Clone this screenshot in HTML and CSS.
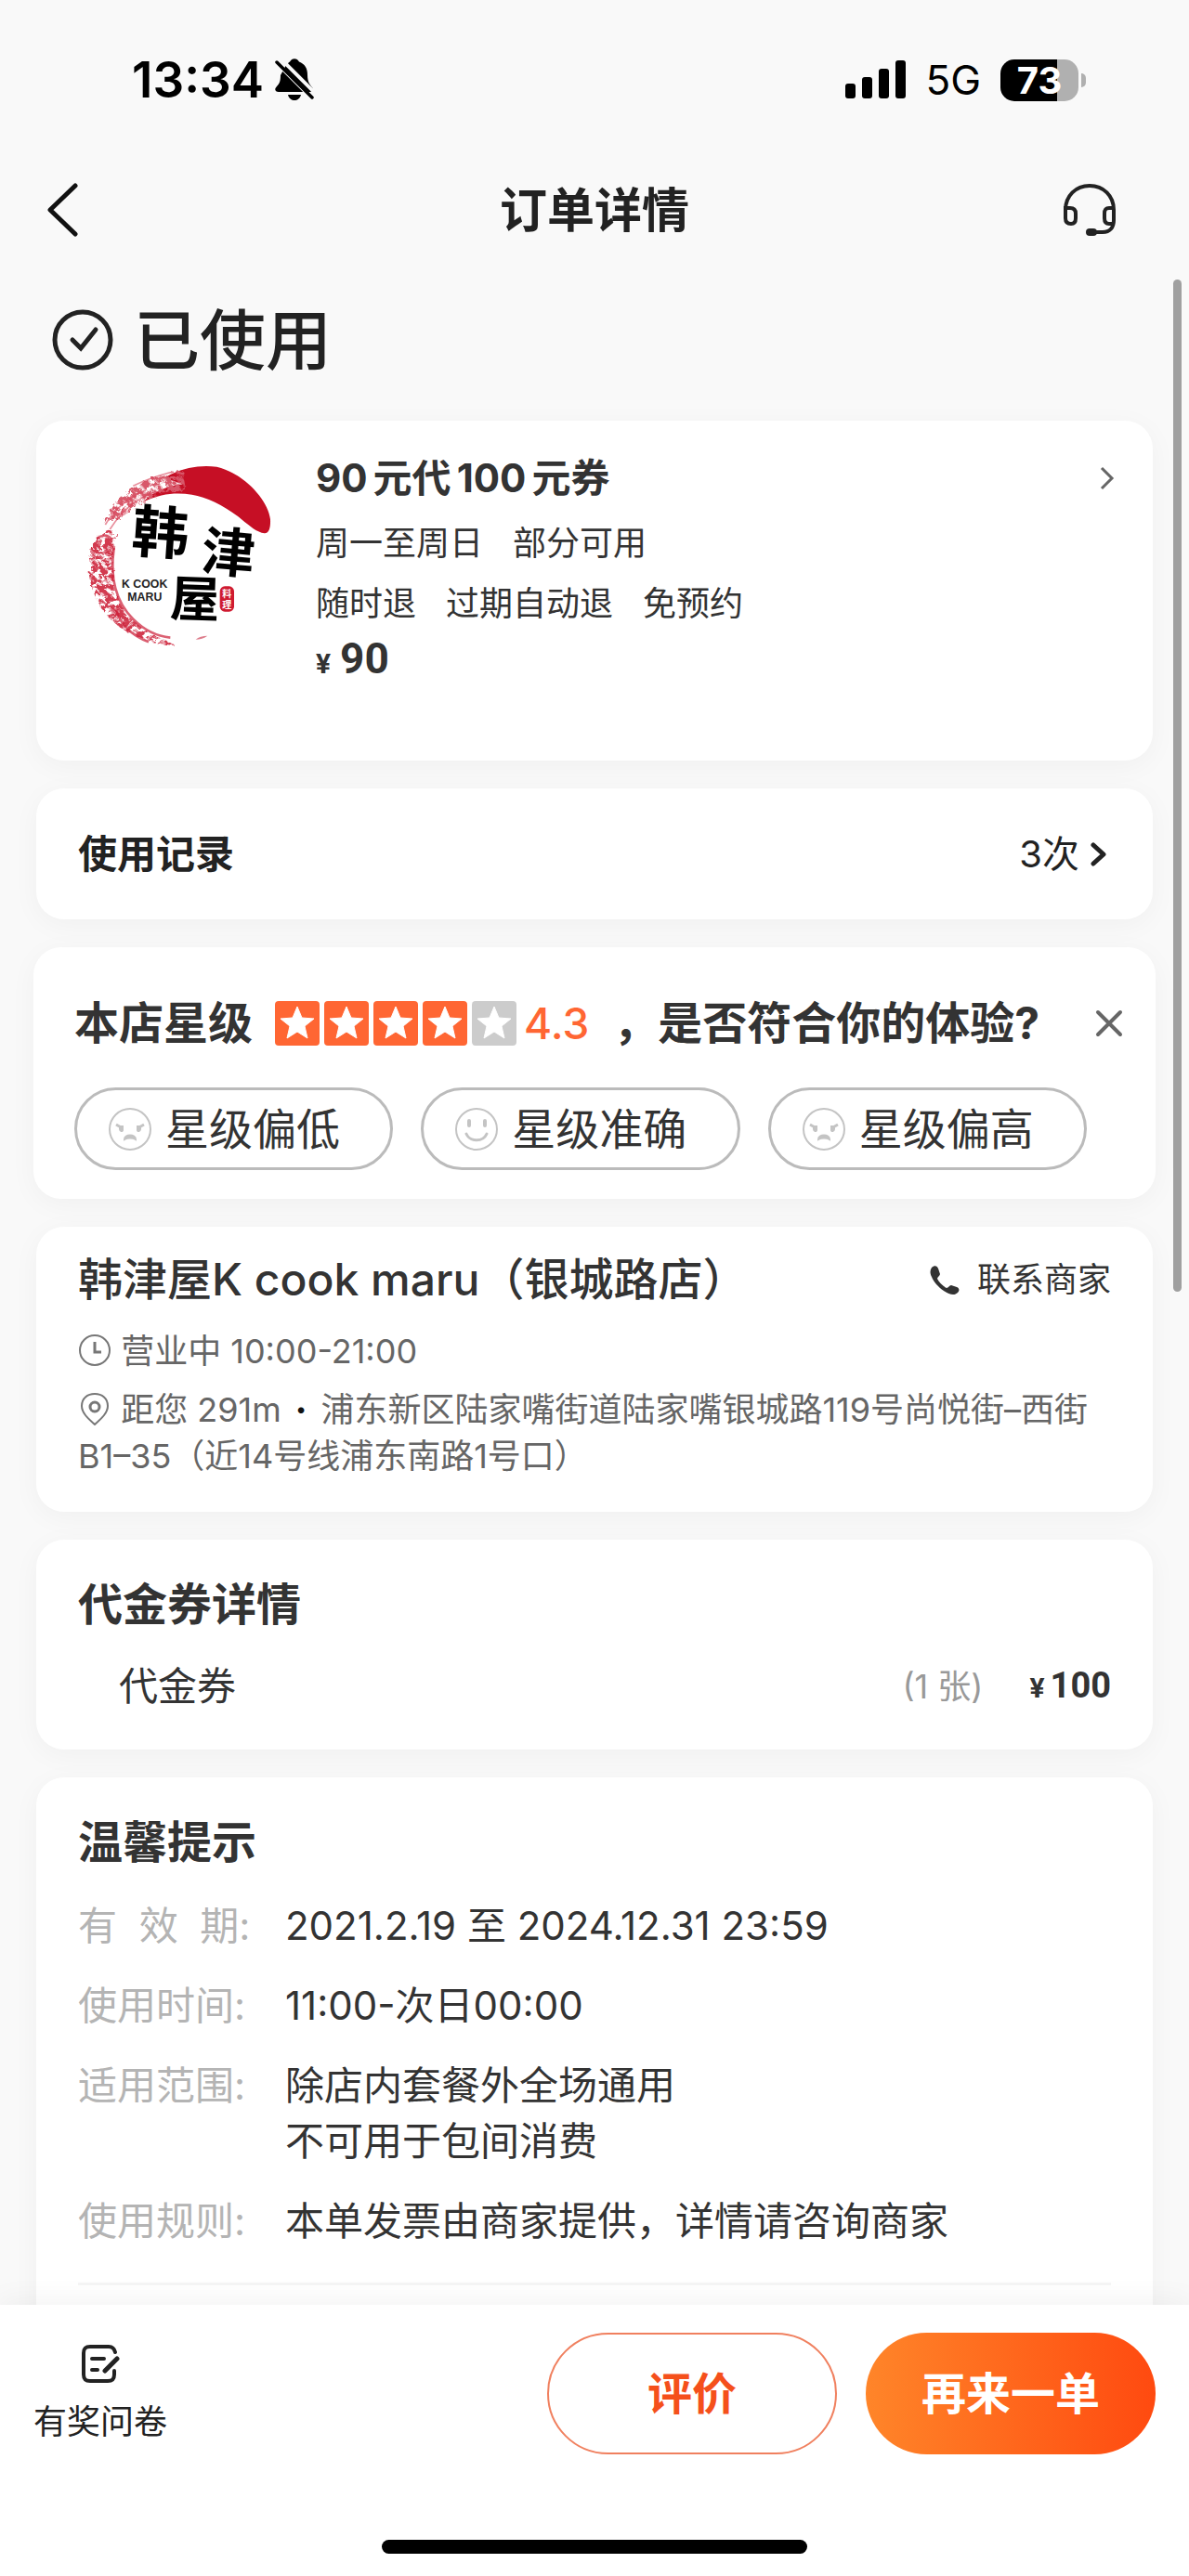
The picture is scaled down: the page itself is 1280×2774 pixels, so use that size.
FILE: index.html
```html
<!DOCTYPE html>
<html lang="zh-CN">
<head>
	<meta charset="utf-8">
	<meta name="viewport" content="width=device-width, initial-scale=1">
	<title>订单详情</title>
	<link rel="stylesheet" href="styles.css">
</head>
<body>
	<div class="status-bar">
		<div class="status-left">
			<span class="time">13:34</span>
			<svg width="42" height="46" viewBox="0 0 42 46">
				<path d="M12 7C14 5 15 4 16 3.500C18-1 24-1 26 3.500C32 6 35 10 35 18C35 25 38 29 40 31C42 34 40 36 38 36H4C0 36-1 33 2 30C5 27 6 24 6 18Z" fill="#000"/>
				<path d="M14 39H28C27 43 24 45 21 45C18 45 15 43 14 39Z" fill="#000"/>
				<path d="M-1 2L42 45M4-2L46 40" stroke="#f9f9f9" stroke-width="4"/>
				<path d="M2 4L40 42" stroke="#000" stroke-width="3.500" stroke-linecap="round"/>
			</svg>
		</div>
		<div class="status-right">
			<svg width="65" height="42" viewBox="0 0 65 42">
				<rect x="0" y="25" width="11" height="16" rx="3"/>
				<rect x="18" y="18" width="11" height="23" rx="3"/>
				<rect x="36" y="9" width="11" height="32" rx="3"/>
				<rect x="54" y="0" width="11" height="41" rx="3"/>
			</svg>
			<span class="network">5G</span>
			<span class="battery">73</span>
		</div>
	</div>

	<header class="nav">
		<a class="nav-back" href="#" aria-label="返回">
			<svg width="34" height="58" viewBox="0 0 34 58"><path d="M31 3L4 29L31 55" fill="none" stroke="#111" stroke-width="5" stroke-linecap="round" stroke-linejoin="round"/></svg>
		</a>
		<h1>订单详情</h1>
		<a class="nav-service" href="#" aria-label="客服">
			<svg width="58" height="58" viewBox="0 0 58 58" fill="none" stroke="#222" stroke-width="4">
				<path d="M3 30V29C3 14 14 3 29 3S55 14 55 29V40C55 48 51 53 43 53H30"/>
				<path d="M3 27H8C12 27 14 29 14 33V38C14 42 12 44 9 44C5 44 3 42 3 38ZM55 27H50C46 27 45 29 45 33V38C45 42 47 44 50 44H54"/>
				<path d="M29 53H33" stroke-width="8" stroke-linecap="round"/>
			</svg>
		</a>
	</header>

	<main class="content">
		<div class="scrollbar"></div>
		<div class="order-state">
			<svg width="66" height="66" viewBox="0 0 66 66" fill="none" stroke="#222" stroke-width="5">
				<circle cx="33" cy="33" r="30"/>
				<path d="M22 33L31 42L47 22" stroke-linecap="round"/>
			</svg>
			<h2>已使用</h2>
		</div>

		<section class="card goods">
			<svg class="goods-logo" width="240" height="240" viewBox="0 0 720 720">
				<defs>
					<filter id="brush" x="-10%" y="-10%" width="120%" height="120%">
						<feTurbulence type="fractalNoise" baseFrequency="0.05 0.06" numOctaves="3" seed="4" result="n"/>
						<feColorMatrix in="n" type="matrix" values="0 0 0 0 0  0 0 0 0 0  0 0 0 0 0  6 0 0 0 -2.300" result="m"/>
						<feComposite in="SourceGraphic" in2="m" operator="in" result="c"/>
						<feDisplacementMap in="c" in2="n" scale="22"/>
					</filter>
				</defs>
				<path d="M290 104C340 74 400 60 460 68C540 86 625 170 633 238C634 262 630 284 614 283C590 280 570 262 540 238C490 196 430 166 380 158C330 150 280 154 225 180C250 150 300 130 350 124Z" fill="#c60f25"/>
				<g filter="url(#brush)">
					<path d="M350 80C240 90 140 150 92 250C130 230 150 240 165 225C210 175 280 150 360 145Z" fill="#d8596b"/>
					<path d="M80 295C30 350 40 440 80 510C120 590 220 640 330 645C250 610 170 570 145 500C115 420 120 350 140 275C110 270 100 280 80 295Z" fill="#d23a50"/>
				</g>
				<path d="M72 300C92 285 112 288 122 305M128 330C115 420 130 500 190 560C220 590 260 615 310 620M135 530C150 580 190 615 240 634" fill="none" stroke="#cc1d36" stroke-width="8" stroke-opacity=".7"/>
				<path d="M100 255C130 205 170 170 230 145M115 270C150 215 200 170 260 150M190 130C230 110 270 96 320 84" fill="none" stroke="#d8425a" stroke-width="5" stroke-opacity=".6"/>
				<path d="M392 626C400 618 415 614 430 614C420 622 405 626 392 626Z" fill="#dd7d8c"/>
				<g class="logo-brush">
					<text x="186" y="348" font-size="184" transform="rotate(4 280 280)">韩</text>
					<text x="412" y="408" font-size="172" transform="rotate(5 500 340)">津</text>
					<text x="310" y="552" font-size="160" transform="rotate(2 380 490)">屋</text>
				</g>
				<text class="logo-en" x="153" y="458" font-size="37">K COOK</text>
				<text class="logo-en" x="172" y="502" font-size="37">MARU</text>
				<rect x="470" y="454" width="46" height="82" rx="16" fill="#cf1a30"/>
				<text class="logo-seal" x="478" y="490" font-size="30">料</text>
				<text class="logo-seal" x="478" y="524" font-size="30">理</text>
			</svg>
			<div class="goods-info">
				<h3><span>90</span><span>元代</span><span>100</span><span>元券</span></h3>
				<p><span>周一至周日</span><span>部分可用</span></p>
				<p><span>随时退</span><span>过期自动退</span><span>免预约</span></p>
				<div class="price"><i>¥</i>90</div>
			</div>
			<a class="goods-more" href="#" aria-label="查看商品">
				<svg width="16" height="28" viewBox="0 0 16 28"><path d="M2 3L13 14L2 25" fill="none" stroke="#666" stroke-width="3"/></svg>
			</a>
		</section>

		<section class="card record">
			<h3>使用记录</h3>
			<a href="#">3次
				<svg width="18" height="28" viewBox="0 0 18 28"><path d="M3 4L14 14L3 24" fill="none" stroke="#222" stroke-width="5" stroke-linecap="round" stroke-linejoin="round"/></svg>
			</a>
		</section>

		<section class="card rating">
			<div class="rating-head">
				<h3>本店星级</h3>
				<svg class="stars" width="260" height="48" viewBox="0 0 260 48">
					<defs>
						<path id="star" d="M24 6L29 18L42 19L32 27L35 40L24 33L13 40L16 27L6 19L19 18Z" fill="#fff" stroke="#fff" stroke-linejoin="round"/>
					</defs>
					<g fill="#ff6633">
						<rect x="0" width="48" height="48" rx="4"/>
						<rect x="53" width="48" height="48" rx="4"/>
						<rect x="106" width="48" height="48" rx="4"/>
						<rect x="159" width="48" height="48" rx="4"/>
					</g>
					<rect x="212" width="48" height="48" rx="4" fill="#ccc"/>
					<use href="#star"/>
					<use href="#star" x="53"/>
					<use href="#star" x="106"/>
					<use href="#star" x="159"/>
					<use href="#star" x="212"/>
				</svg>
				<span class="score">4.3</span>
				<span class="question">，是否符合你的体验?</span>
				<button class="close" type="button" aria-label="关闭">
					<svg width="30" height="30" viewBox="0 0 30 30"><path d="M3 3L27 27M27 3L3 27" stroke="#666" stroke-width="4" stroke-linecap="round"/></svg>
				</button>
			</div>
			<div class="pills">
				<button class="pill" type="button">
					<svg width="46" height="46" viewBox="0 0 46 46" fill="none" stroke="#c4c4c4" stroke-width="2">
						<circle cx="23" cy="23" r="22"/>
						<path d="M8 18L15 22M38 18L31 22" stroke-width="3"/>
						<path d="M12 20H15V24C15 26 12 25 12 23ZM31 20H34V23C34 25 31 26 31 24ZM17 34C17 28 29 28 29 34C26 32 20 32 17 34Z" fill="#c4c4c4"/>
					</svg>
					星级偏低
				</button>
				<button class="pill" type="button">
					<svg width="46" height="46" viewBox="0 0 46 46" fill="none" stroke="#c4c4c4" stroke-width="2">
						<circle cx="23" cy="23" r="22"/>
						<path d="M15 14V19M32 14V19" stroke-width="4" stroke-linecap="round"/>
						<path d="M12 28C16 37 30 37 34 28" stroke-width="3" stroke-linecap="round"/>
					</svg>
					星级准确
				</button>
				<button class="pill" type="button">
					<svg width="46" height="46" viewBox="0 0 46 46" fill="none" stroke="#c4c4c4" stroke-width="2">
						<circle cx="23" cy="23" r="22"/>
						<path d="M8 18L15 22M38 18L31 22" stroke-width="3"/>
						<path d="M12 20H15V24C15 26 12 25 12 23ZM31 20H34V23C34 25 31 26 31 24ZM17 34C17 28 29 28 29 34C26 32 20 32 17 34Z" fill="#c4c4c4"/>
					</svg>
					星级偏高
				</button>
			</div>
		</section>

		<section class="card shop">
			<div class="shop-head">
				<h3>韩津屋K cook maru（银城路店）</h3>
				<a href="#">
					<svg width="34" height="34" viewBox="0 0 34 34"><path d="M3 4C6 1 9 2 10 5L12 11C12 13 9 14 9 16C11 20 15 24 19 26C21 26 22 23 24 23L30 25C33 26 33 29 31 31C28 34 23 34 16 29C10 25 5 19 3 14C1 10 1 7 3 4Z" fill="#333"/></svg>
					联系商家
				</a>
			</div>
			<p class="hours">
				<svg width="36" height="36" viewBox="0 0 36 36" fill="none" stroke="#777" stroke-width="2"><circle cx="18" cy="18" r="16"/><path d="M18 9V20H25" stroke-width="3"/></svg>
				营业中 10:00-21:00
			</p>
			<p class="address">
				<svg width="36" height="36" viewBox="0 0 36 36" fill="none" stroke="#777" stroke-width="2"><path d="M18 35C10 28 4 22 4 15C4 7 10 2 18 2S32 7 32 15C32 22 26 28 18 35Z"/><circle cx="18" cy="16" r="5" stroke-width="3"/></svg>
				距您 291m<b>·</b>浦东新区陆家嘴街道陆家嘴银城路119号尚悦街–西街B1–35（近14号线浦东南路1号口）
			</p>
		</section>

		<section class="card voucher">
			<h3>代金券详情</h3>
			<div class="voucher-row">
				<span class="name">代金券</span>
				<span class="count">(1 张)</span>
				<span class="price"><i>¥</i>100</span>
			</div>
		</section>

		<section class="card tips">
			<h3>温馨提示</h3>
			<dl>
				<dt>有&nbsp;&nbsp;效&nbsp;&nbsp;期:</dt>
				<dd>2021.2.19 至 2024.12.31 23:59</dd>
				<dt>使用时间:</dt>
				<dd>11:00-次日00:00</dd>
				<dt>适用范围:</dt>
				<dd>除店内套餐外全场通用<br>不可用于包间消费</dd>
				<dt>使用规则:</dt>
				<dd>本单发票由商家提供，详情请咨询商家</dd>
			</dl>
		</section>
	</main>

	<footer class="footer">
		<div class="actions">
			<a class="survey" href="#">
				<svg width="42" height="42" viewBox="0 0 42 42" fill="none" stroke="#222" stroke-width="4" stroke-linecap="round">
					<path d="M37 8C36 4 34 2 30 2H10C5 2 3 4 3 9V32C3 37 5 39 10 39H29C34 39 36 37 36 32V28"/>
					<path d="M12 15H25M12 27H18"/>
					<path d="M39 15L26 28" stroke-width="5"/>
				</svg>
				有奖问卷
			</a>
			<button class="btn btn-line" type="button">评价</button>
			<button class="btn btn-main" type="button">再来一单</button>
		</div>
		<div class="home-indicator"></div>
	</footer>
</body>
</html>
```
FILE: styles.css
```css
*
{
	box-sizing:border-box;
}
body
{
	display:flex;
	flex-direction:column;
	height:100vh;
	margin:0;
	background:#f9f9f9;
	color:#333;
	font-family:Inter,"Noto Sans CJK SC",sans-serif;
	font-size:36px;
	line-height:1;
}
h1,h2,h3,p,dl,dd
{
	margin:0;
}
h3
{
	font-size:48px;
	line-height:64px;
	font-weight:700;
}
a
{
	color:inherit;
	text-decoration:none;
}
button
{
	padding:0;
	border:0;
	background:none;
	color:inherit;
	font-family:inherit;
	line-height:1;
}
svg
{
	flex:none;
}

/* 状态栏 */
.status-bar
{
	display:flex;
	flex:none;
	align-items:center;
	justify-content:space-between;
	height:172px;
	padding:0 119px 0 142px;
	color:#000;
}
.status-left,.status-right
{
	display:flex;
	align-items:center;
}
.status-left
{
	gap:12px;
}
.status-right
{
	gap:21px;
}
.time
{
	font-size:53px;
	font-weight:600;
}
.network
{
	font-size:44px;
}
.battery
{
	position:relative;
	width:84px;
	height:45px;
	border-radius:15px;
	background:linear-gradient(to right,#000 73%,#b0b0b0 73%);
	color:#fff;
	font-size:40px;
	line-height:45px;
	font-weight:700;
	text-align:center;
}
.battery::after
{
	content:"";
	position:absolute;
	top:15px;
	right:-8px;
	width:5px;
	height:15px;
	border-radius:0 8px 8px 0;
	background:#b0b0b0;
}

/* 导航 */
.nav
{
	display:flex;
	flex:none;
	align-items:center;
	height:108px;
	padding:0 78px 0 50px;
}
.nav-back
{
	display:flex;
	width:86px;
}
.nav-service
{
	display:flex;
}
.nav h1
{
	flex:1;
	color:#222;
	font-size:51px;
	font-weight:700;
	text-align:center;
}

/* 内容 */
.content
{
	position:relative;
	display:flex;
	flex:1;
	flex-direction:column;
	gap:30px;
	min-height:0;
	padding:40px 39px 0;
	overflow:hidden;
}
.content > *
{
	flex:none;
}
.scrollbar
{
	position:absolute;
	top:21px;
	right:8px;
	width:9px;
	height:1090px;
	border-radius:5px;
	background:#a0a0a0;
}
.order-state
{
	display:flex;
	align-items:center;
	gap:22px;
	height:103px;
	padding:0 0 11px 17px;
	color:#222;
}
.order-state h2
{
	font-size:71px;
	line-height:92px;
	font-weight:500;
}
.card
{
	padding:0 45px;
	border-radius:30px;
	background:#fff;
	box-shadow:0 6px 30px rgba(0,0,0,.04);
}

.goods
{
	display:flex;
	gap:20px;
	height:366px;
	padding:27px 41px;
}
.goods-info
{
	flex:1;
	padding-top:5px;
}
.goods-info h3
{
	display:flex;
	gap:6px;
	margin-bottom:8px;
	font-size:42px;
	line-height:60px;
}
.goods-info p
{
	display:flex;
	gap:32px;
	line-height:65px;
}
.price
{
	font-family:Roboto,sans-serif;
	font-size:46px;
	line-height:52px;
	font-weight:700;
}
.price i
{
	margin-right:10px;
	font-size:30px;
	font-style:normal;
}
.goods-more
{
	padding-top:18px;
}
.logo-brush
{
	font-family:"Noto Sans CJK SC",sans-serif;
	font-weight:700;
}
.logo-en
{
	font-family:"Liberation Sans",sans-serif;
	font-weight:700;
	fill:#222;
}
.logo-seal
{
	font-family:"Noto Sans CJK SC",sans-serif;
	font-weight:700;
	fill:#fff;
}

.record
{
	display:flex;
	align-items:center;
	justify-content:space-between;
	height:141px;
	padding-right:49px;
}
.record h3
{
	color:#222;
	font-size:42px;
}
.record a
{
	display:flex;
	align-items:center;
	gap:12px;
	color:#222;
	font-size:40px;
}

.rating
{
	margin:0 -3px;
	padding:57px 35px 31px 44px;
}
.rating-head
{
	display:flex;
	align-items:center;
	height:50px;
	font-size:48px;
}
.stars
{
	margin-left:24px;
}
.score
{
	margin:0 26px 0 8px;
	color:#ff6633;
	font-size:46px;
	font-weight:500;
}
.question
{
	font-weight:700;
}
.close
{
	display:flex;
	margin-left:auto;
}
.pills
{
	display:flex;
	gap:30px;
	margin-top:44px;
	padding-right:39px;
}
.pill
{
	display:flex;
	flex:1;
	align-items:center;
	gap:15px;
	height:89px;
	padding-left:34px;
	border:3px solid #bbb;
	border-radius:45px;
	font-size:47px;
}

.shop
{
	padding-top:25px;
	padding-bottom:35px;
	color:#666;
}
.shop-head
{
	display:flex;
	align-items:center;
	justify-content:space-between;
	color:#333;
}
.shop-head h3
{
	font-weight:500;
}
.shop-head a
{
	display:flex;
	align-items:center;
	gap:18px;
}
.shop p
{
	line-height:50px;
}
.shop p svg
{
	vertical-align:-4px;
}
.hours
{
	margin:20px 0 13px;
}
.address b
{
	margin:0 15px;
	color:#111;
	font-weight:800;
}

.voucher
{
	padding-top:38px;
	padding-bottom:38px;
}
.voucher-row
{
	display:flex;
	align-items:center;
	margin-top:26px;
	line-height:60px;
}
.name
{
	flex:1;
	padding-left:44px;
	font-size:42px;
}
.count
{
	margin-right:50px;
	color:#999;
}
.voucher-row .price
{
	font-size:38px;
}
.voucher-row .price i
{
	margin-right:6px;
}

.tips
{
	padding-top:38px;
	padding-bottom:60px;
}
.tips dl
{
	display:grid;
	grid-template-columns:223px 1fr;
	row-gap:26px;
	margin-top:28px;
	padding-bottom:36px;
	border-bottom:3px solid #f5f5f5;
	font-size:42px;
	line-height:60px;
}
.tips dt
{
	color:#b4b4b4;
}

/* 底部操作 */
.footer
{
	position:relative;
	flex:none;
	padding:30px 36px 24px;
	background:#fff;
	box-shadow:0 -4px 30px rgba(0,0,0,.05);
}
.actions
{
	display:flex;
	gap:31px;
}
.survey
{
	display:flex;
	flex-direction:column;
	align-items:center;
	gap:14px;
	margin-right:auto;
	padding-top:13px;
	color:#222;
	line-height:54px;
}
.btn
{
	width:312px;
	height:131px;
	border-radius:66px;
	font-size:48px;
	font-weight:700;
}
.btn-line
{
	border:2px solid #f0805f;
	color:#f5501b;
}
.btn-main
{
	background:linear-gradient(to right,#ff8529,#ff4a10);
	color:#fff;
}
.home-indicator
{
	width:458px;
	height:15px;
	margin:92px auto 0;
	border-radius:8px;
	background:#000;
}
```
